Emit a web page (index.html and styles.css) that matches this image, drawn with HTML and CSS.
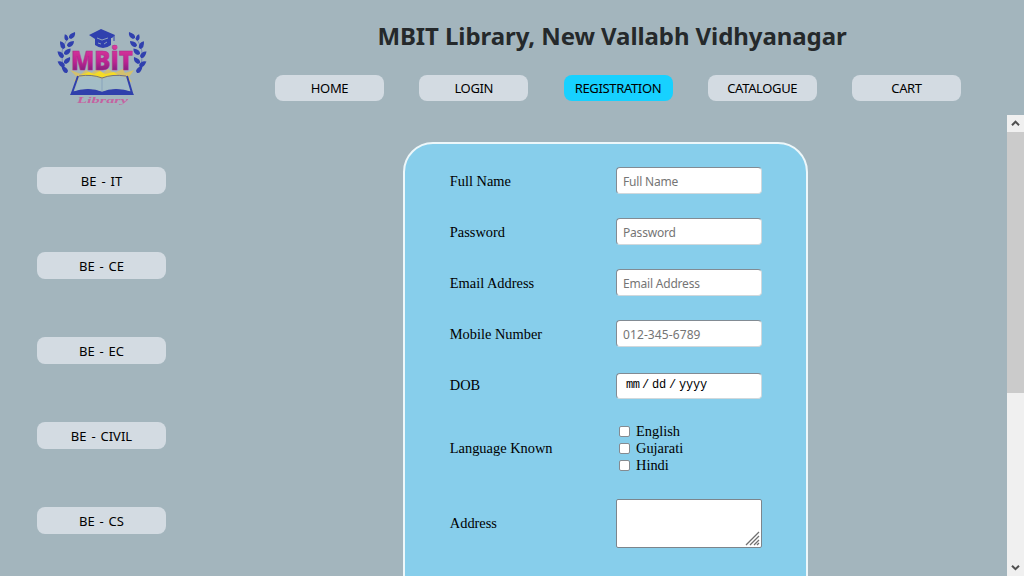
FILE: index.html
```html
<!DOCTYPE html>
<html lang="en">
<head>
<meta charset="utf-8">
<title>MBIT Library</title>
<link rel="stylesheet" href="styles.css">
</head>
<body>
<header class="header">
  <svg class="logo" viewBox="0 0 105 95" role="img" aria-label="MBIT Library">
    <defs>
      <linearGradient id="word" x1="0" y1="0" x2="0" y2="1"><stop offset="0" stop-color="#e33f9e"/><stop offset=".55" stop-color="#bd2391"/><stop offset=".85" stop-color="#752078"/></linearGradient>
      <path id="leaf" d="M-1 0Q-2-4 5-6Q6-1 1 1Z"/>
      <g id="branch" fill="#3040ae">
        <path d="M23 14Q5 28 16 52" fill="none" stroke="#5362b6" stroke-width=".6"/>
        <use href="#leaf" transform="translate(20 18)"/>
        <use href="#leaf" transform="translate(17 20) rotate(-60) scale(.8)"/>
        <use href="#leaf" transform="translate(18 26) rotate(10)"/>
        <use href="#leaf" transform="translate(14 28) rotate(-70)"/>
        <use href="#leaf" transform="translate(15 34) rotate(5)"/>
        <use href="#leaf" transform="translate(13 37) rotate(-85)"/>
        <use href="#leaf" transform="translate(15 43)"/>
        <use href="#leaf" transform="translate(14 46) rotate(-95)"/>
        <use href="#leaf" transform="translate(17 52) rotate(-85)"/>
      </g>
    </defs>
    <use href="#branch"/>
    <use href="#branch" transform="translate(104 0) scale(-1 1)"/>
    <path d="M20 50L31 54 36 50 41 53 48 49 53 53 58 49 64 53 73 49 75 53 84 50 79 57 82 62 74 60 66 59 60 58 52 60 43 57 34 59 31 63 24 61 27 57Z" fill="#dfc35a" opacity=".8"/>
    <path d="M31 55L39 52 44 54 50 51 55 54 64 52 70 57 62 56 52 58 42 56 34 58Z" fill="#f5dc26"/>
    <path d="M29 57Q42 54 52 59Q62 54 76 57L81 71Q65 66 52 71Q38 66 25 71Z" fill="#a4bdc6"/>
    <path d="M28 56L22 73Q39 67 52 73Q65 67 82 73L77 56" fill="none" stroke="#3040ac" stroke-width="2"/>
    <path d="M22 72Q39 67 52 72Q65 67 82 72L84 75H20Z" fill="#3040ac"/>
    <path d="M29 56Q42 54 52 58Q62 54 76 56" fill="none" stroke="#4c579b" stroke-width=".8"/>
    <path d="M52 58V71" stroke="#7e98b8" stroke-width=".7"/>
    <path d="M39 15L51 9 65 15 62 18H61V25Q53 31 45 25V19Z" fill="#3040ae"/>
    <path d="M64 15V21" stroke="#3040ae"/>
    <path d="M47 18L52 20 58 18M48 23L51 24M54 24L57 22" fill="none" stroke="#97abc0" stroke-width=".9"/>
    <text class="logo-word" x="21" y="50" textLength="62" lengthAdjust="spacingAndGlyphs" fill="url(#word)">MBİT</text>
    <text class="logo-caption" x="27" y="83" textLength="51" lengthAdjust="spacingAndGlyphs">Library</text>
  </svg>
  <div class="header-main">
    <h1 class="title">MBIT Library, New Vallabh Vidhyanagar</h1>
    <nav class="nav">
      <a class="button">HOME</a><a class="button">LOGIN</a><a class="button active">REGISTRATION</a><a class="button">CATALOGUE</a><a class="button">CART</a>
    </nav>
  </div>
</header>
<div class="content">
  <aside class="sidebar">
    <a class="button">BE - IT</a><a class="button">BE - CE</a><a class="button">BE - EC</a><a class="button">BE - CIVIL</a><a class="button">BE - CS</a>
  </aside>
  <main class="page">
    <form class="card">
      <div class="row"><label for="name">Full Name</label><input class="field" id="name" placeholder="Full Name"></div>
      <div class="row"><label for="password">Password</label><input class="field" id="password" type="password" placeholder="Password"></div>
      <div class="row"><label for="email">Email Address</label><input class="field" id="email" placeholder="Email Address"></div>
      <div class="row"><label for="mobile">Mobile Number</label><input class="field" id="mobile" placeholder="012-345-6789"></div>
      <div class="row"><span>DOB</span><div class="field date"><span class="month">mm</span><span class="slash">/</span><span class="day">dd</span><span class="slash">/</span><span class="year">yyyy</span></div></div>
      <div class="row languages"><span>Language Known</span><div class="checks">
        <label><input type="checkbox">English</label><label><input type="checkbox">Gujarati</label><label><input type="checkbox">Hindi</label>
      </div></div>
      <div class="row address"><span>Address</span><div class="textarea"><svg class="grip" viewBox="0 0 15 15"><path d="M1 14L14 1M5 14L14 5M9 14L14 9M12 14L14 12"/></svg></div></div>
    </form>
  </main>
  <div class="scrollbar">
    <svg class="arrow" viewBox="0 0 17 17"><path d="M5 10.2L8.5 6.7 12 10.2"/></svg>
    <div class="thumb"></div>
    <svg class="arrow down" viewBox="0 0 17 17"><path d="M5 6.7L8.5 10.2 12 6.7"/></svg>
  </div>
</div>
</body>
</html>
```
FILE: styles.css
```css
* { box-sizing: border-box; }
body { margin: 0; height: 576px; overflow: hidden; background: #a3b5bd; color: #000; font-family: "Liberation Serif", serif; }
.header { display: flex; height: 115px; }
.logo { width: 105px; height: 95px; margin: 20px 0 0 50px; flex: none; }
.logo-word { font: 800 26px "Open Sans", sans-serif; stroke: #ad298d; stroke-width: .5px; }
.logo-caption { font: italic bold 9px "Liberation Serif", serif; fill: #c563a1; }
.header-main { margin-left: 120px; width: 686px; }
.title { margin: 19px 0 0; height: 56px; line-height: 34px; text-align: center; white-space: nowrap; font-family: "Noto Sans", sans-serif; font-size: 24px; font-weight: 700; letter-spacing: -.08px; color: #25292b; padding-right: 12px; }
.nav { display: flex; justify-content: space-between; }
.button { display: flex; align-items: center; justify-content: center; width: 109px; height: 26px; border-radius: 8px; background: #d3dbe2; font-family: "Noto Sans", sans-serif; font-size: 13px; letter-spacing: -.35px; white-space: nowrap; }
.active { background: #17d1ff; }
.content { display: flex; height: 461px; }
.sidebar { display: flex; flex-direction: column; gap: 58px; width: 166px; padding: 52px 0 0 37px; }
.sidebar .button { width: 129px; height: 27px; flex: none; letter-spacing: 0; word-spacing: 1.5px; }
.page { flex: 1; padding: 27px 0 0 237px; overflow: hidden; }
.card { width: 405px; height: 520px; border: 2px solid #edf7fa; border-radius: 30px; background: #87ceeb; padding: 12px 44px 0 44.8px; }
.row { display: flex; justify-content: space-between; align-items: center; height: 51px; font-size: 14.4px; }
.languages { height: 75px; }
.address { height: 75px; }
.field { width: 146px; height: 27px; margin: -2px 0 0; border: 1px solid; border-color: #828b93 #d0d8dc #d0d8dc #828b93; border-radius: 4px; background: #fff; padding: 2px 6px 0; font-family: "Noto Sans", sans-serif; font-size: 12px; letter-spacing: -.2px; outline: 0; }
.field::placeholder { color: #757575; opacity: 1; }
#mobile { letter-spacing: .1px; }
.date { display: flex; align-items: center; height: 26px; margin-top: 0; padding: 0 8px 2px 9px; font-family: "Liberation Mono", monospace; font-size: 12px; }
.month { width: 16px; letter-spacing: -.5px; }
.slash { width: 10px; }
.day { width: 17px; }
.checks { width: 146px; }
.checks label { display: flex; align-items: center; height: 17px; }
.checks input { appearance: none; width: 11px; height: 11px; margin: 0 6px 0 3px; border: 1px solid #858b91; border-radius: 2px; background: #fff; }
.textarea { display: flex; justify-content: flex-end; align-items: flex-end; width: 146px; height: 49px; padding: 1px; border: 1px solid #7c858c; border-radius: 2px; background: #fff; }
.grip { width: 15px; height: 15px; fill: none; stroke: #707070; stroke-width: 1.3; }
.scrollbar { display: flex; flex-direction: column; width: 17px; background: #f0f0f0; }
.arrow { width: 17px; height: 17px; flex: none; fill: none; stroke: #505050; stroke-width: 2; }
.thumb { height: 261px; background: #cbcbcb; }
.down { margin-top: auto; }
```
